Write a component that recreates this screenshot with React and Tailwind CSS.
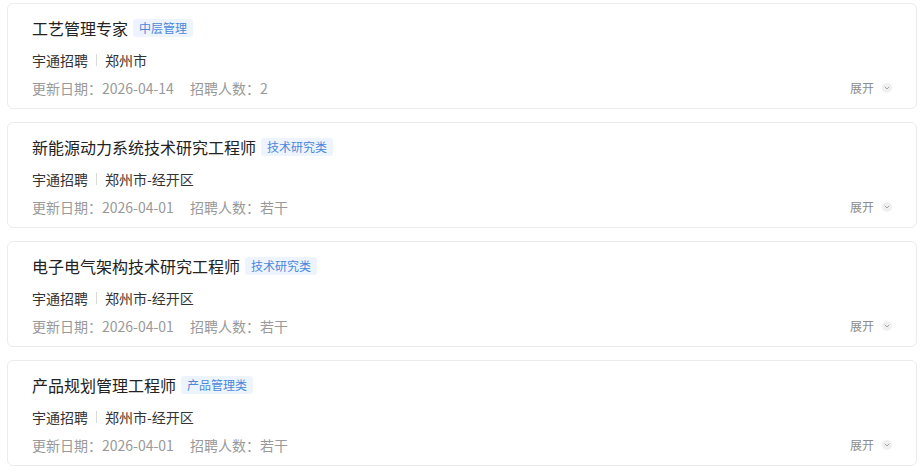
import React from 'react';

const jobs = [
  { title: '工艺管理专家', tag: '中层管理', city: '郑州市', date: '2026-04-14', count: '2' },
  { title: '新能源动力系统技术研究工程师', tag: '技术研究类', city: '郑州市-经开区', date: '2026-04-01', count: '若干' },
  { title: '电子电气架构技术研究工程师', tag: '技术研究类', city: '郑州市-经开区', date: '2026-04-01', count: '若干' },
  { title: '产品规划管理工程师', tag: '产品管理类', city: '郑州市-经开区', date: '2026-04-01', count: '若干' },
];

const ChevronDot = () => (
  <span className="ml-2 inline-flex h-[10px] w-[10px] items-center justify-center rounded-full bg-[#f0f0f0]">
    <svg width="6" height="4" viewBox="0 0 6 4" fill="none">
      <path d="M1 1l2 2 2-2" stroke="#999" strokeWidth="0.9" strokeLinecap="round" strokeLinejoin="round" />
    </svg>
  </span>
);

const JobCard = ({ job }) => (
  <div className="rounded-[6px] border border-[#ececec] bg-white pl-6 pr-6 pt-[14px] pb-[10px]">
    <div className="flex h-5 items-center">
      <h3 className="text-[16px] leading-5 text-[#222]">{job.title}</h3>
      <span className="ml-[5px] rounded-[3px] bg-[#edf4fd] px-1.5 text-[12px] leading-[18px] text-[#4a88dc]">
        {job.tag}
      </span>
    </div>
    <div className="mt-3 flex h-5 items-center text-[14px] leading-5 text-[#333]">
      <span>宇通招聘</span>
      <span className="mx-2 h-3 w-px bg-[#d9d9d9]" />
      <span>{job.city}</span>
    </div>
    <div className="mt-2 flex h-5 items-center text-[14px] leading-5 text-[#999]">
      <span>更新日期：{job.date}</span>
      <span className="ml-4">招聘人数：{job.count}</span>
      <button className="ml-auto flex items-center text-[12px] text-[#8c8c8c]">
        展开
        <ChevronDot />
      </button>
    </div>
  </div>
);

export default function App() {
  return (
    <div
      className="min-h-screen bg-white pl-[7px] pr-[3px] pt-[3px]"
      style={{ fontFamily: '"Noto Sans CJK SC", "Noto Sans", sans-serif' }}
    >
      <div className="flex flex-col gap-[13px]">
        {jobs.map((job) => (
          <JobCard key={job.title} job={job} />
        ))}
      </div>
    </div>
  );
}
